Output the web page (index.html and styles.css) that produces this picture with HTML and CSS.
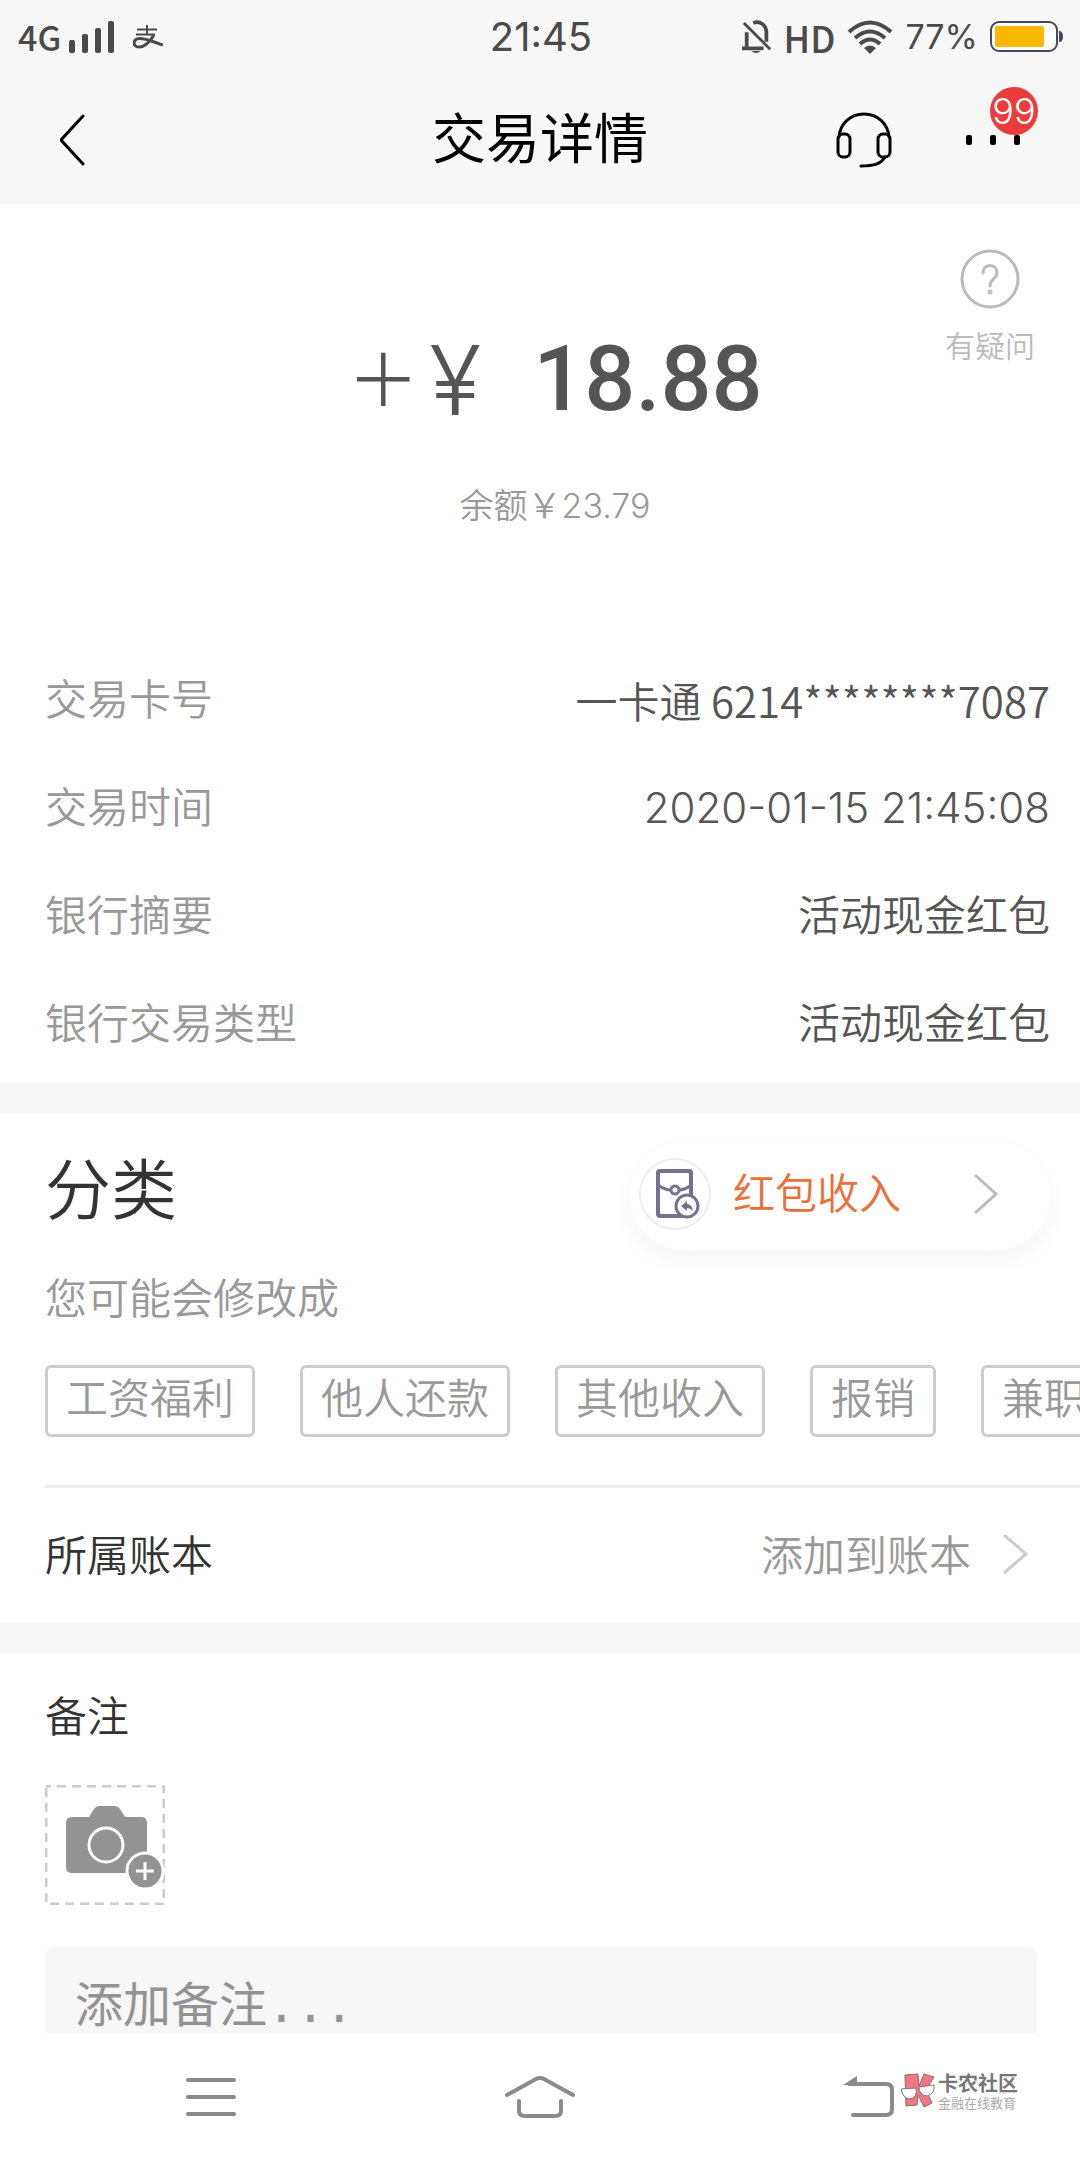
FILE: index.html
```html
<!DOCTYPE html>
<html lang="zh-CN">
<head>
    <meta charset="UTF-8">
    <meta name="viewport" content="width=device-width, initial-scale=1">
    <title>交易详情</title>
    <link rel="stylesheet" href="styles.css">
</head>
<body>
    <div class="status-bar">
        <div class="status-left">
            <span class="network">4G</span>
            <svg class="signal" width="46" height="34" viewBox="0 0 46 34" fill="#4a4a4a">
                <rect x="0" y="20" width="6" height="13" rx="2"/>
                <rect x="13" y="14" width="6" height="19" rx="2"/>
                <rect x="26" y="8" width="6" height="25" rx="2"/>
                <rect x="39" y="1" width="6" height="32" rx="2"/>
            </svg>
            <svg width="30" height="24" viewBox="0 0 30 24" fill="none" stroke="#4a4a4a" stroke-width="2">
                <path d="M4 4.500H24M3 9.500H22M14 0V9.500" />
                <path d="M21 9.500C18 16 12 22 6 22C-1 22 0 14 6 13.500C13 13 20 17 30 20" stroke-width="3"/>
            </svg>
        </div>
        <time class="clock">21:45</time>
        <div class="status-right">
            <svg width="30" height="36" viewBox="0 0 32 36" fill="none" stroke="#4a4a4a" stroke-width="4">
                <path d="M5 13V29M0 30H23M12 3C20 0 26 6 26 13V23"/>
                <path d="M2 3L30 31" stroke-width="3"/>
                <path d="M10 33H20Q15 37 10 33Z" fill="#4a4a4a" stroke="none"/>
            </svg>
            <span class="hd">HD</span>
            <svg class="wifi" width="46" height="34" viewBox="0 0 46 34" fill="none" stroke="#4a4a4a" stroke-width="4">
                <path d="M2 12Q23 -7 44 12M8 18Q23 5 38 18M13 24Q23 15 33 24"/>
                <path d="M17 28Q23 23 29 28L23 34Z" fill="#4a4a4a" stroke="none"/>
            </svg>
            <span class="percent">77%</span>
            <svg width="74" height="32" viewBox="0 0 74 32">
                <rect x="1" y="1" width="66" height="29" rx="8" fill="#fff" stroke="#434a5c" stroke-width="2"/>
                <rect x="5" y="5" width="49" height="21" rx="2" fill="#fbb800"/>
                <path d="M69 10Q73 10 73 15.500T69 21Z" fill="#434a5c"/>
            </svg>
        </div>
    </div>

    <header class="title-bar">
        <button class="icon-btn back-btn" aria-label="返回">
            <svg width="26" height="52" viewBox="0 0 26 52" fill="none" stroke="#000" stroke-width="3" stroke-linecap="round">
                <path d="M23 2L1 26L23 50"/>
            </svg>
        </button>
        <h1>交易详情</h1>
        <div class="title-actions">
            <button class="icon-btn" aria-label="客服">
                <svg width="56" height="56" viewBox="0 0 56 56" fill="none" stroke="#000" stroke-width="3" stroke-linecap="round">
                    <rect x="2" y="22" width="12" height="23" rx="5"/>
                    <rect x="42" y="22" width="12" height="23" rx="5"/>
                    <path d="M3 25C4 12 14 2 28 2S52 12 53 25M49 45C45 52 38 54 25 54"/>
                </svg>
            </button>
            <button class="icon-btn more-btn" aria-label="更多">
                <svg width="54" height="10" viewBox="0 0 54 10">
                    <rect x="0" width="6" height="10" rx="2"/>
                    <rect x="24" width="6" height="10" rx="2"/>
                    <rect x="48" width="6" height="10" rx="2"/>
                </svg>
                <span class="badge">99</span>
            </button>
        </div>
    </header>

    <main>
        <section class="summary">
            <button class="help-btn">
                <svg width="60" height="60" viewBox="0 0 60 60" fill="none" stroke="#bbb" stroke-width="3" stroke-linecap="round">
                    <circle cx="30" cy="30" r="28"/>
                    <path d="M23 24C23 14 37 14 37 24C37 30 30 30 30 37"/>
                    <circle cx="30" cy="43" r="1"/>
                </svg>
                有疑问
            </button>
            <p class="amount"><span class="sign"><span class="plus">＋</span><span>¥</span></span><strong>18.88</strong></p>
            <p class="balance">余额￥23.79</p>
        </section>

        <dl class="details">
            <div class="row"><dt>交易卡号</dt><dd class="card-no">一卡通 6214********7087</dd></div>
            <div class="row"><dt>交易时间</dt><dd>2020-01-15 21:45:08</dd></div>
            <div class="row"><dt>银行摘要</dt><dd>活动现金红包</dd></div>
            <div class="row"><dt>银行交易类型</dt><dd>活动现金红包</dd></div>
        </dl>

        <section class="category">
            <div class="category-head">
                <h2>分类</h2>
                <button class="category-btn">
                    <span class="category-icon">
                        <svg width="44" height="50" viewBox="0 0 44 50" fill="none" stroke="#757190" stroke-width="4">
                            <rect x="2" y="2" width="33" height="45" rx="2"/>
                            <path d="M2 16Q9 21 15 21M23 21Q29 21 35 16" stroke-width="3"/>
                            <circle cx="19" cy="21" r="4" stroke-width="3"/>
                            <circle cx="31" cy="37" r="11" fill="#fff" stroke-width="3"/>
                            <path d="M25 37L31 32V35Q36 35 37 42Q34 39 31 39V42Z" fill="#757190" stroke="none"/>
                        </svg>
                    </span>
                    红包收入
                    <svg class="chevron" width="26" height="42" viewBox="0 0 26 42" fill="none" stroke="#bbb" stroke-width="3">
                        <path d="M2 2L23 21L2 40"/>
                    </svg>
                </button>
            </div>
            <p class="hint">您可能会修改成</p>
            <div class="tags">
                <button>工资福利</button>
                <button>他人还款</button>
                <button>其他收入</button>
                <button>报销</button>
                <button>兼职</button>
            </div>
            <a class="book" href="#">
                <span>所属账本</span>
                <span class="book-value">添加到账本</span>
                <svg width="26" height="42" viewBox="0 0 26 42" fill="none" stroke="#ccc" stroke-width="3">
                    <path d="M1 0L23 19L1 38"/>
                </svg>
            </a>
        </section>

        <section class="remark">
            <label for="remark">备注</label>
            <button class="photo-btn" aria-label="添加照片">
                <svg width="120" height="120" viewBox="0 0 120 120">
                    <rect x="1" y="1" width="118" height="118" fill="none" stroke="#ccc" stroke-width="3" stroke-dasharray="9 6" stroke-dashoffset="4"/>
                    <path d="M27 32H44L49 24Q51 21 54 21H70Q73 21 75 24L80 32H96Q102 32 102 38V88H27Q21 88 21 82V38Q21 32 27 32Z" fill="#939393"/>
                    <circle cx="61" cy="60" r="17" fill="none" stroke="#fff" stroke-width="3"/>
                    <circle cx="100" cy="86" r="18" fill="#939393" stroke="#fff" stroke-width="3"/>
                    <path d="M91 86H109M100 77V95" stroke="#fff" stroke-width="3"/>
                </svg>
            </button>
            <textarea id="remark" placeholder="添加备注..."></textarea>
        </section>
    </main>

    <nav class="nav-bar">
        <button class="icon-btn" aria-label="菜单">
            <svg width="50" height="40" viewBox="0 0 50 40" stroke="#8a8a8a" stroke-width="4" stroke-linecap="round">
                <path d="M2 3H48M2 20H48M2 37H48"/>
            </svg>
        </button>
        <button class="icon-btn" aria-label="主页">
            <svg width="70" height="44" viewBox="0 0 70 44" fill="none" stroke="#8a8a8a" stroke-width="4" stroke-linecap="round">
                <path d="M2 20L31 4Q35 2 39 4L68 20M14 26V36Q14 41 20 41H50Q56 41 56 36V26"/>
            </svg>
        </button>
        <button class="icon-btn" aria-label="后退">
            <svg width="52" height="42" viewBox="0 0 52 42" fill="none" stroke="#8a8a8a" stroke-width="4" stroke-linecap="round">
                <path d="M6 8H43Q49 8 49 14V33Q49 39 43 39H10"/>
                <path d="M0 9L14 0V9Z" fill="#8a8a8a" stroke="none"/>
            </svg>
        </button>
        <div class="watermark">
            <svg width="36" height="36" viewBox="0 0 36 36">
                <path d="M5 2L18 1L19 13L24 1L34 4L26 17L32 30L24 34L18 22L17 32L6 33Z" fill="#f27784" stroke="#8a6a6c"/>
                <g fill="#fff" stroke="#777">
                    <path d="M1 16L16 15Q18 25 9 26Q3 25 1 16Z"/>
                    <path d="M19 14L34 12Q35 21 27 23Q19 22 19 14Z"/>
                </g>
            </svg>
            <div>
                <strong>卡农社区</strong>
                <small>金融在线教育</small>
            </div>
        </div>
    </nav>
</body>
</html>
```
FILE: styles.css
```css
* {
    box-sizing: border-box;
}
body {
    margin: 0;
    height: 100vh;
    display: flex;
    flex-direction: column;
    background: #fff;
    color: #555;
    font-family: Inter, "Noto Sans CJK SC", sans-serif;
    font-size: 42px;
    font-weight: 350;
    line-height: 60px;
}
h1, h2, p, dl, dd {
    margin: 0;
    font-weight: 350;
}
button {
    border: none;
    padding: 0;
    background: none;
    color: inherit;
    font: inherit;
    white-space: nowrap;
    cursor: pointer;
}
svg {
    display: block;
    flex-shrink: 0;
}

/* status bar */
.status-bar {
    display: grid;
    grid-template-columns: 1fr auto 1fr;
    align-items: center;
    height: 72px;
    padding: 2px 16px 0 18px;
    background: #f7f7f7;
    color: #4a4a4a;
    font-weight: 400;
}
.status-left, .status-right {
    display: flex;
    align-items: center;
}
.status-right {
    justify-content: flex-end;
    gap: 12px;
}
.network, .hd {
    font-family: "Noto Sans CJK SC", sans-serif;
    font-size: 36px;
    font-weight: 500;
}
.network {
    font-size: 34px;
}
.signal {
    margin: 0 18px 0 8px;
}
.clock {
    font-size: 40px;
}
.percent {
    font-size: 34px;
}

/* title bar */
.title-bar {
    display: grid;
    grid-template-columns: 1fr auto 1fr;
    align-items: center;
    height: 132px;
    padding: 4px 60px 0;
    background: #f7f7f7;
    color: #000;
}
h1 {
    font-size: 54px;
    font-weight: 400;
}
.back-btn {
    justify-self: start;
}
.title-actions {
    display: flex;
    justify-content: flex-end;
    align-items: center;
    gap: 74px;
}
.more-btn {
    position: relative;
}
.badge {
    position: absolute;
    right: -18px;
    bottom: 10px;
    width: 48px;
    height: 48px;
    border-radius: 50%;
    background: #eb3b3b;
    color: #fff;
    font-size: 36px;
    line-height: 48px;
    text-align: center;
}

/* content */
main {
    flex: 1;
    min-height: 0;
    overflow: hidden;
}
.summary {
    position: relative;
    padding: 126px 0 110px 30px;
    text-align: center;
}
.help-btn {
    position: absolute;
    top: 45px;
    right: 45px;
    display: flex;
    flex-direction: column;
    align-items: center;
    gap: 17px;
    color: #bbb;
    font-size: 30px;
    line-height: 40px;
}
.amount {
    display: flex;
    justify-content: center;
    align-items: center;
    gap: 52px;
    height: 100px;
}
.sign {
    display: flex;
    align-items: center;
    gap: 10px;
    font-size: 96px;
}
.plus {
    font-size: 72px;
}
.amount strong {
    font-family: Roboto, sans-serif;
    font-size: 90px;
    font-weight: 500;
}
.balance {
    margin-top: 46px;
    color: #999;
    font-size: 34px;
}
.row {
    display: flex;
    justify-content: space-between;
    align-items: center;
    height: 108px;
    padding: 0 30px 0 45px;
}
.row dt, .hint {
    color: #999;
}
.card-no {
    font-family: "Noto Sans CJK SC", sans-serif;
}

/* category */
.category {
    margin-top: 5px;
    border-top: 30px solid #f7f7f7;
    border-bottom: 30px solid #f7f7f7;
    padding: 30px 0 0 45px;
}
.category-head {
    display: flex;
    justify-content: space-between;
    align-items: center;
    padding-right: 30px;
}
h2 {
    padding-bottom: 14px;
    color: #333;
    font-size: 66px;
}
.category-btn {
    display: flex;
    align-items: center;
    width: 420px;
    height: 107px;
    padding: 0 51px 6px 9px;
    border-radius: 54px;
    box-shadow: 0 9px 24px rgba(0, 0, 0, 0.04);
    color: #e8703a;
}
.category-icon {
    display: flex;
    justify-content: center;
    align-items: center;
    width: 72px;
    height: 72px;
    margin-right: 22px;
    padding-left: 6px;
    border: 2px solid #eee;
    border-radius: 50%;
}
.chevron {
    margin-left: auto;
}
.hint {
    margin-top: 19px;
}
.tags {
    display: flex;
    gap: 45px;
    margin-top: 36px;
    padding-bottom: 48px;
    border-bottom: 3px solid #eee;
    overflow: hidden;
}
.tags button {
    height: 72px;
    padding: 0 18px 4px;
    border: 3px solid #ccc;
    border-radius: 6px;
    color: #999;
}
.book {
    display: flex;
    align-items: center;
    height: 135px;
    padding-right: 51px;
    color: #333;
    text-decoration: none;
}
.book-value {
    margin: 0 32px 0 auto;
    color: #999;
}

/* remark */
.remark {
    display: flex;
    flex-direction: column;
    align-items: flex-start;
    padding: 34px 43px 0 45px;
}
.remark label {
    color: #333;
}
.photo-btn {
    margin: 38px 0 42px;
}
textarea {
    width: 100%;
    height: 240px;
    padding: 28px 30px;
    border: none;
    border-radius: 9px;
    background: #f7f7f7;
    resize: none;
    color: #333;
    font: 400 48px/60px "DejaVu Sans Mono", "Noto Sans CJK SC", monospace;
}
textarea::placeholder {
    color: #939393;
}

/* navigation */
.nav-bar {
    position: relative;
    display: grid;
    grid-template-columns: repeat(3, 1fr);
    align-items: center;
    justify-items: center;
    height: 127px;
    padding: 0 47px;
    background: #fff;
}
.watermark {
    position: absolute;
    top: 40px;
    right: 62px;
    display: flex;
    gap: 2px;
    color: #777;
}
.watermark strong, .watermark small {
    display: block;
    font-size: 20px;
    font-weight: 700;
    line-height: 22px;
}
.watermark small {
    color: #aaa;
    font-size: 13px;
    font-weight: 400;
    line-height: 16px;
}
```
